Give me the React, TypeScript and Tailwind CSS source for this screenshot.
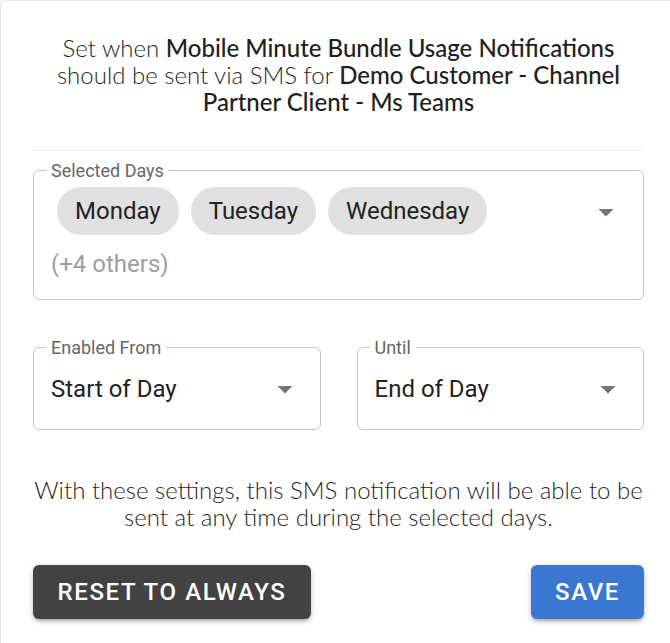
import React from 'react'

const lato = { fontFamily: 'Lato, "Open Sans", sans-serif' }
const roboto = { fontFamily: 'Roboto, "Liberation Sans", sans-serif' }

function ArrowDown({ className }: { className?: string }) {
  return (
    <svg viewBox="0 0 24 24" className={className} fill="#757575">
      <path d="M7 10l5 5 5-5z" />
    </svg>
  )
}

function FieldLabel({ children }: { children: React.ReactNode }) {
  return (
    <span className="absolute left-[12px] top-0 -translate-y-1/2 bg-white px-[5px] text-[18px] leading-[20px] text-[#666]">
      {children}
    </span>
  )
}

function SelectField({ label, value }: { label: string; value: string }) {
  return (
    <div className="relative flex h-[83px] items-center rounded-[6px] border border-[#c4c4c4]">
      <FieldLabel>{label}</FieldLabel>
      <div className="flex-1 pl-[17px] text-[24px] text-[#222]">{value}</div>
      <ArrowDown className="mr-[17px] h-[36px] w-[36px]" />
    </div>
  )
}

const btnShadow =
  'shadow-[0_3px_3px_-2px_rgba(0,0,0,0.2),0_3px_4px_0_rgba(0,0,0,0.14),0_1px_8px_0_rgba(0,0,0,0.12)]'

export default function App() {
  const days = ['Monday', 'Tuesday', 'Wednesday']

  return (
    <div className="h-[643px] w-[670px] overflow-hidden bg-white">
      <div className="h-[660px] w-[700px] rounded-tl-[6px] border-l border-t border-[#e4e4e4] pl-[32px]">
        <div className="w-[611px]">
          {/* Heading */}
          <p className="pt-[33px] text-center text-[24px] font-light leading-[27px] text-[#1f1f1f]" style={lato}>
            Set when <span className="font-medium text-[#1f1f1f]">Mobile Minute Bundle Usage Notifications</span> should
            be sent via SMS for <span className="font-medium text-[#1f1f1f]">Demo Customer - Channel Partner Client - Ms Teams</span>
          </p>

          <div className="mt-[35px] h-px bg-[#e8e8e8]" />

          <div style={roboto}>
            {/* Selected days */}
            <div className="relative mt-[19px] flex items-start rounded-[6px] border border-[#c4c4c4]">
              <FieldLabel>Selected Days</FieldLabel>
              <div className="flex-1 pl-[17px] pt-[16px] pb-[17px]">
                <div className="flex gap-[12px] pl-[6px]">
                  {days.map(d => (
                    <span
                      key={d}
                      className="flex h-[48px] items-center rounded-full bg-[#e0e0e0] px-[18px] text-[24px] text-[#222]"
                    >
                      {d}
                    </span>
                  ))}
                </div>
                <div className="mt-[11px] h-[36px] text-[24px] leading-[36px] text-[#9e9e9e]">(+4 others)</div>
              </div>
              <ArrowDown className="mr-[19px] mt-[23px] h-[36px] w-[36px]" />
            </div>

            {/* Time range */}
            <div className="mt-[47px] grid grid-cols-2 gap-[36px]">
              <SelectField label="Enabled From" value="Start of Day" />
              <SelectField label="Until" value="End of Day" />
            </div>
          </div>

          <p className="mt-[46px] text-center text-[24px] font-light leading-[27px] text-[#1f1f1f]" style={lato}>
            With these settings, this SMS notification will be able to be sent at any time during the selected days.
          </p>

          <div className="mt-[35px] flex justify-between" style={roboto}>
            <button className={`h-[54px] w-[278px] rounded-[6px] bg-[#424242] text-[24px] font-medium uppercase tracking-[1.6px] text-white ${btnShadow}`}>
              Reset to always
            </button>
            <button className={`h-[54px] w-[113px] rounded-[6px] bg-[#3a77d0] text-[24px] font-medium uppercase tracking-[1.6px] text-white ${btnShadow}`}>
              Save
            </button>
          </div>
        </div>
      </div>
    </div>
  )
}
